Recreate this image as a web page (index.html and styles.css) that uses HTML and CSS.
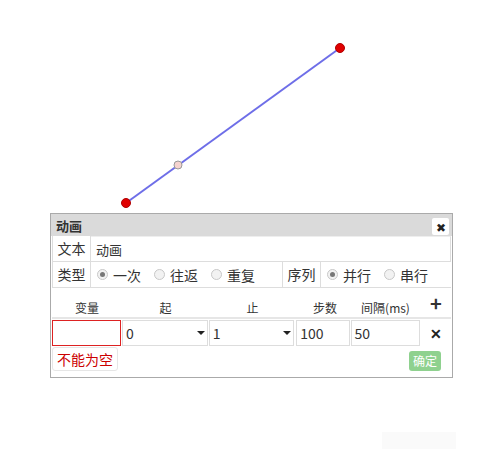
FILE: index.html
```html
<!doctype html>
<html>
<head>
<meta charset="utf-8">
<title>动画</title>
<link rel="stylesheet" href="styles.css">
</head>
<body>
<div id="stage">
	<svg class="board" width="499" height="464">
		<line x1="126" y1="203" x2="340" y2="48" stroke="#6e6ee8" stroke-width="2"/>
		<circle cx="126" cy="203" r="4.5" fill="#e00000" stroke="#b00000" stroke-width="1"/>
		<circle cx="340" cy="48" r="4.5" fill="#e00000" stroke="#b00000" stroke-width="1"/>
		<circle cx="178" cy="165" r="4" fill="#f5d3cf" stroke="#999" stroke-width="1"/>
	</svg>

	<div id="dlg">
		<div class="hd">
			<span class="title">动画</span>
			<span class="close">&#x2716;</span>
		</div>
		<div class="row">
			<div class="lab">文本</div>
			<div class="txt">动画</div>
		</div>
		<div class="row">
			<div class="lab">类型</div>
			<div class="opts w1">
				<span class="rd on"></span>一次
				<span class="rd"></span>往返
				<span class="rd"></span>重复
			</div>
			<div class="lab">序列</div>
			<div class="opts">
				<span class="rd on"></span>并行
				<span class="rd"></span>串行
			</div>
		</div>

		<div class="th">
			<span class="c1">变量</span>
			<span class="c2">起</span>
			<span class="c3">止</span>
			<span class="c4">步数</span>
			<span class="c5">间隔(ms)</span>
			<span class="c6 plus">+</span>
		</div>
		<div class="tr">
			<span class="c1 inp err"></span>
			<span class="c2 inp sel">0<i></i></span>
			<span class="c3 inp sel">1<i></i></span>
			<span class="c4 inp">100</span>
			<span class="c5 inp">50</span>
			<span class="c6 del">&#x2715;</span>
		</div>
		<div class="ft">
			<span class="tip">不能为空</span>
			<span class="ok">确定</span>
		</div>
	</div>

	<div class="ghost"></div>
</div>
</body>
</html>
```

FILE: styles.css
```css
* { margin:0; padding:0; box-sizing:border-box;}
body{ background:#fff; font-family:"Microsoft YaHei","Noto Sans CJK SC",sans-serif; font-size:13px; color:#333;}
#stage{ width:499px; height:464px; position:relative; overflow:hidden;}
.board{ position:absolute; left:0; top:0;}

#dlg{ position:absolute; left:50px; top:213px; width:403px; height:165px; border:1px solid #aaa; background:#fff; padding:0 1px;}
.hd{ height:22px; background:#dadada; margin:0 -1px; display:flex; align-items:center; justify-content:space-between; padding:0 3px 0 5px;}
.title{ font-weight:bold; font-size:13px; color:#333;}
.close{ width:17px; height:17px; background:#fff; border-radius:2px; font-size:12px; line-height:17px; text-align:center; color:#222; margin-top:2px;}

.row{ height:26px; display:flex; border-bottom:1px solid #ddd; border-left:1px solid #ddd;}
.lab{ width:38px; border-right:1px solid #ddd; line-height:25px; text-align:center; font-size:14px;}
.txt{ flex:1; line-height:25px; padding-left:5px; border-top:1px solid #eee; border-right:1px solid #ddd;}
.opts{ display:flex; align-items:center; padding-left:6px; font-size:14px;}
.w1{ width:192px; border-right:1px solid #ddd;}
.opts .rd{ margin-right:5px;}
.opts .rd ~ .rd{ margin-left:13px;}
.rd{ width:11px; height:11px; border:1px solid #c8c8c8; border-radius:50%; background:#f2f2f2; display:inline-block; position:relative;}
.rd.on::after{ content:""; position:absolute; left:2px; top:2px; width:5px; height:5px; border-radius:50%; background:#777;}

.th{ display:flex; margin-top:11px; height:20px; align-items:flex-end; font-size:12px; color:#333; border-bottom:2px solid #e6e6e6; padding-bottom:1px;}
.tr{ display:flex; height:26px; margin-top:1px;}
.c1{ width:70px; text-align:center;}
.c2{ width:87px; text-align:center;}
.c3{ width:87px; text-align:center;}
.c4{ width:54px; text-align:center;}
.c5{ width:71px; text-align:center;}
.c6{ width:30px; text-align:center;}
.th .c4{ padding-left:4px;}
.plus{ font-size:20px; font-weight:bold; line-height:20px; position:relative; top:-3px;}

.inp{ border:1px solid #ddd; margin-right:1px; text-align:left; padding-left:3px; font-size:14px; line-height:24px; position:relative;}
.tr .c4{ margin-left:1px;}
.err{ border-color:#d22;}
.sel i{ position:absolute; right:2px; top:10px; border-left:4px solid transparent; border-right:4px solid transparent; border-top:4px solid #222;}
.del{ font-size:14px; line-height:26px; color:#222; font-weight:bold;}

.ft{ display:flex; justify-content:space-between; align-items:flex-start; margin-top:1px;}
.tip{ color:#c00; border:1px solid #e6e6e6; border-radius:3px; padding:0 4px; line-height:22px; font-size:14px; background:#fff;}
.ok{ background:#8fd18f; color:#fff; font-size:12px; line-height:20px; padding:0 4px; border-radius:3px; margin-top:4px; margin-right:10px;}

.ghost{ position:absolute; left:382px; top:432px; width:74px; height:17px; background:#fafafa;}
```
